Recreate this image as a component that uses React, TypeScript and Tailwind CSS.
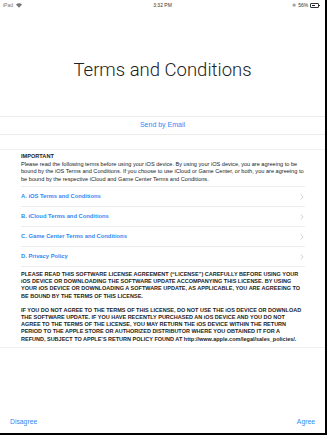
import React from 'react';

const blue = 'text-[#2f8af5]';

const rows = [
  'A. iOS Terms and Conditions',
  'B. iCloud Terms and Conditions',
  'C. Game Center Terms and Conditions',
  'D. Privacy Policy',
];

const Chevron = () => (
  <svg width="4" height="6" viewBox="0 0 4 6" fill="none" stroke="#c7c7cc" strokeWidth="0.8">
    <path d="M0.6 0.5 L3.2 3 L0.6 5.5" />
  </svg>
);

const Wifi = () => (
  <svg width="6" height="5" viewBox="0 0 12 9" fill="#777">
    <path d="M6 9 L0 2.6 C3.4 -0.8 8.6 -0.8 12 2.6 Z" />
  </svg>
);

const Battery = () => (
  <div className="flex items-center">
    <div className="w-[9px] h-[4.5px] border-[0.6px] border-[#333] rounded-[1px] p-[0.5px] flex">
      <div className="w-[56%] h-full bg-[#222]" />
    </div>
    <div className="w-[0.8px] h-[1.8px] bg-[#333]" />
  </div>
);

export default function App() {
  return (
    <div
      className="w-[327px] h-[435px] bg-white border-r-2 border-b-2 border-black flex flex-col overflow-hidden"
      style={{ fontFamily: '"Liberation Sans", Arial, sans-serif' }}
    >
      {/* status bar */}
      <div className="h-[11px] flex items-center justify-between px-[3px] text-[5px] text-[#777] relative">
        <div className="flex items-center gap-[3px]">
          <span>iPad</span>
          <Wifi />
        </div>
        <span className="absolute left-1/2 -translate-x-1/2 text-[#333]">3:32 PM</span>
        <div className="flex items-center gap-[2px] pr-[2px]">
          <span className="text-[#999] text-[5px]">✱</span>
          <span className="text-[#333]">56%</span>
          <Battery />
        </div>
      </div>

      {/* title */}
      <div className="h-[106px] border-b border-[#ececec] flex justify-center pt-[50px]">
        <h1
          className="text-[18.5px] leading-none font-light text-[#222]"
          style={{ fontFamily: 'Roboto, "Liberation Sans", sans-serif' }}
        >
          Terms and Conditions
        </h1>
      </div>

      <div className="h-[18px] border-b border-[#ececec] flex items-center justify-center">
        <span className={`text-[7px] ${blue}`}>Send by Email</span>
      </div>

      <div className="h-[14px]" />

      {/* license scroll area */}
      <div className="border-t border-b border-[#f0f0f0] pl-[21px] pr-[20px] pt-[3px] pb-[4px] text-[#222]">
        <div className="text-[5.6px] leading-[7.5px]">
          <div className="font-bold">IMPORTANT</div>
          <p>
            Please read the following terms before using your iOS device. By using your iOS device, you are agreeing to be
            bound by the iOS Terms and Conditions. If you choose to use iCloud or Game Center, or both, you are agreeing
            to be bound by the respective iCloud and Game Center Terms and Conditions.
          </p>
        </div>

        <div className="mt-[3px] border-t border-[#ececec]">
          {rows.map((r) => (
            <div key={r} className="h-[20px] border-b border-[#ececec] flex items-center justify-between pr-[1px]">
              <span className={`text-[5.8px] font-bold ${blue}`}>{r}</span>
              <Chevron />
            </div>
          ))}
        </div>

        <div className="mt-[4px] text-[5.5px] leading-[7.2px] font-bold">
          <p>
            PLEASE READ THIS SOFTWARE LICENSE AGREEMENT (“LICENSE”) CAREFULLY BEFORE USING YOUR iOS DEVICE OR DOWNLOADING
            THE SOFTWARE UPDATE ACCOMPANYING THIS LICENSE. BY USING YOUR iOS DEVICE OR DOWNLOADING A SOFTWARE UPDATE, AS
            APPLICABLE, YOU ARE AGREEING TO BE BOUND BY THE TERMS OF THIS LICENSE.
          </p>
          <p className="mt-[7px]">
            IF YOU DO NOT AGREE TO THE TERMS OF THIS LICENSE, DO NOT USE THE iOS DEVICE OR DOWNLOAD THE SOFTWARE UPDATE.
            IF YOU HAVE RECENTLY PURCHASED AN iOS DEVICE AND YOU DO NOT AGREE TO THE TERMS OF THE LICENSE, YOU MAY RETURN
            THE iOS DEVICE WITHIN THE RETURN PERIOD TO THE APPLE STORE OR AUTHORIZED DISTRIBUTOR WHERE YOU OBTAINED IT FOR
            A REFUND, SUBJECT TO APPLE’S RETURN POLICY FOUND AT http://www.apple.com/legal/sales_policies/.
          </p>
        </div>
      </div>

      <div className="flex-1 flex items-end justify-between px-[10px] pb-[6px]">
        <span className={`text-[6.8px] ${blue}`}>Disagree</span>
        <span className={`text-[6.8px] ${blue}`}>Agree</span>
      </div>
    </div>
  );
}
